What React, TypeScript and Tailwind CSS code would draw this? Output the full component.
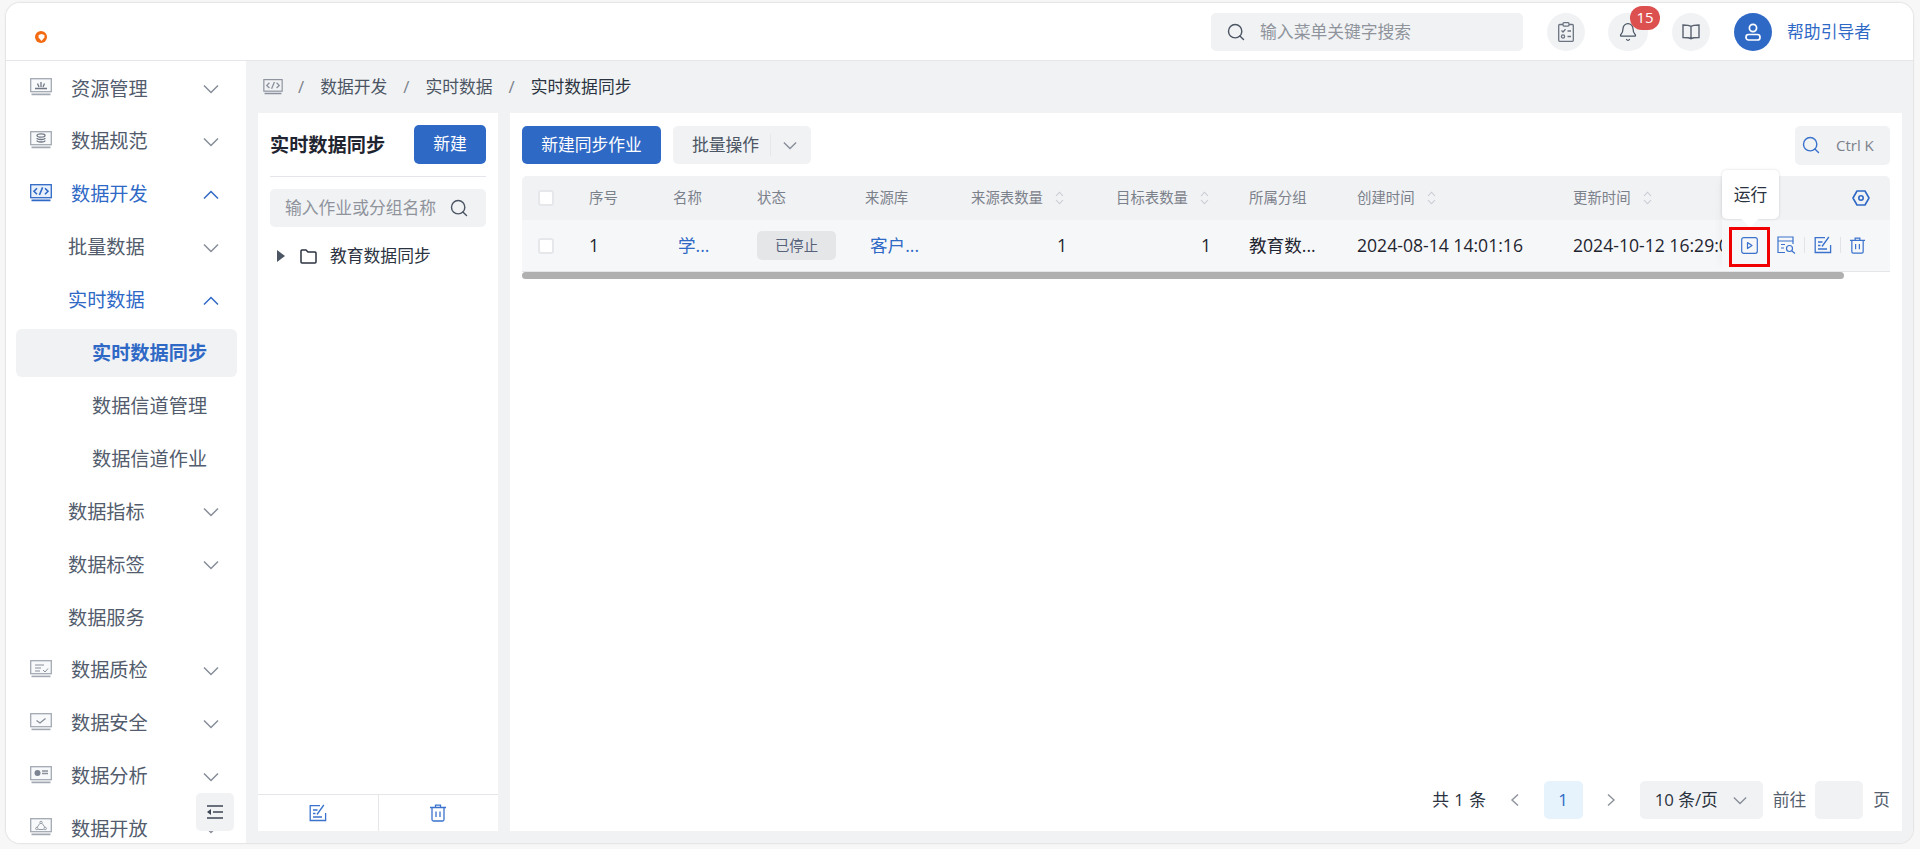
import { Search, Bell } from 'lucide-react';
import type { ReactNode } from 'react';

const Chevron = ({ up, blue, small }: { up?: boolean; blue?: boolean; small?: boolean }) => (
  <svg width={small ? 14 : 16} height={small ? 9 : 10} viewBox="0 0 16 10" fill="none" stroke={blue ? '#2f69c6' : '#878d98'} strokeWidth="1.5" className={up ? 'rotate-180' : ''}>
    <polyline points="1,1.5 8,8.5 15,1.5" />
  </svg>
);

// small monitor used by the top level menu icons
const Monitor = ({ children, active }: { children?: ReactNode; active?: boolean }) => {
  const c = active ? '#2f69c6' : '#a3a9b2';
  return (
    <svg width="22" height="18" viewBox="0 0 22 18" fill="none" stroke={c} strokeWidth="1.3">
      <rect x="0.7" y="0.7" width="20.6" height="13" fill={active ? '#e8f0fb' : '#f8f9fa'} />
      <line x1="1.5" y1="16.4" x2="20.5" y2="16.4" strokeWidth="1.6" />
      {children}
    </svg>
  );
};

const menuIcons: Record<string, ReactNode> = {
  资源管理: (
    <Monitor>
      <path d="M5 10.5h12M11 4v5M7.5 5.5 9 9M14.5 5.5 13 9" stroke="#6f7785" />
    </Monitor>
  ),
  数据规范: (
    <Monitor>
      <ellipse cx="11" cy="4.5" rx="4" ry="1.6" stroke="#6f7785" />
      <path d="M7 7c0 2 8 2 8 0M7 9.5c0 2 8 2 8 0" stroke="#6f7785" />
    </Monitor>
  ),
  数据开发: (
    <Monitor active>
      <path d="M7 4.2 4 7.2l3 3M15 4.2l3 3-3 3M12.6 3.4 9.4 11" stroke="#2f69c6" strokeWidth="1.6" />
    </Monitor>
  ),
  数据质检: (
    <Monitor>
      <path d="M5 5h9M5 8h6M5 11h5M13 10l2 2 3-3.5" stroke="#8a919c" strokeWidth="1" />
    </Monitor>
  ),
  数据安全: (
    <Monitor>
      <path d="M6.5 7.5 10 10l5.5-4.5" stroke="#868d98" />
    </Monitor>
  ),
  数据分析: (
    <Monitor>
      <circle cx="7.5" cy="7" r="3" fill="#7d8592" stroke="none" />
      <path d="M12 5h6M12 7.5h6" stroke="#8a919c" strokeWidth="1.6" />
    </Monitor>
  ),
  数据开放: (
    <Monitor>
      <circle cx="11" cy="4.5" r="1.2" stroke="#8a919c" strokeWidth="0.9" />
      <circle cx="6.8" cy="10.5" r="1.2" stroke="#8a919c" strokeWidth="0.9" />
      <circle cx="15.2" cy="10.5" r="1.2" stroke="#8a919c" strokeWidth="0.9" />
      <path d="M9.8 5.5 7.2 9.2M12.2 5.5l2.6 3.7M8.3 11.5h5.4" stroke="#8a919c" strokeWidth="0.9" />
    </Monitor>
  ),
};

type MenuRow = { label: string; level: 1 | 2 | 3; arrow?: 'up' | 'down'; blue?: boolean; active?: boolean };

const menu: MenuRow[] = [
  { label: '资源管理', level: 1, arrow: 'down' },
  { label: '数据规范', level: 1, arrow: 'down' },
  { label: '数据开发', level: 1, arrow: 'up', blue: true },
  { label: '批量数据', level: 2, arrow: 'down' },
  { label: '实时数据', level: 2, arrow: 'up', blue: true },
  { label: '实时数据同步', level: 3, active: true },
  { label: '数据信道管理', level: 3 },
  { label: '数据信道作业', level: 3 },
  { label: '数据指标', level: 2, arrow: 'down' },
  { label: '数据标签', level: 2, arrow: 'down' },
  { label: '数据服务', level: 2 },
  { label: '数据质检', level: 1, arrow: 'down' },
  { label: '数据安全', level: 1, arrow: 'down' },
  { label: '数据分析', level: 1, arrow: 'down' },
  { label: '数据开放', level: 1, arrow: 'down' },
];

const EditIcon = ({ size = 18 }: { size?: number }) => (
  <svg width={size} height={size} viewBox="0 0 18 18" fill="none" stroke="#3a72cc" strokeWidth="1.3">
    <path d="M11 1.7H1.2v14.8h15.4V9" />
    <path d="M8 10.5 14.8 1" />
    <path d="M4 6h4.5M4 9.5h2.5M4 13h9" />
  </svg>
);

const TrashIcon = ({ size = 18 }: { size?: number }) => (
  <svg width={size} height={size} viewBox="0 0 18 18" fill="none" stroke="#3a72cc" strokeWidth="1.3">
    <path d="M1 3.5h16M6.5 3.5V1.2h5v2.3" />
    <path d="M3 3.5v12a1.5 1.5 0 0 0 1.5 1.5h9a1.5 1.5 0 0 0 1.5-1.5v-12" />
    <path d="M7 7.5v5.5M11 7.5v5.5" />
  </svg>
);

const SortIcon = () => (
  <svg width="9" height="14" viewBox="0 0 9 14" fill="none" stroke="#c6cad1" strokeWidth="1.1" className="shrink-0">
    <path d="M1 5 4.5 1.2 8 5M1 9l3.5 3.8L8 9" />
  </svg>
);

const Checkbox = () => <span className="block h-[16px] w-[16px] rounded-[3px] border-2 border-[#e6e7eb] bg-white" />;

function Sidebar() {
  return (
    <aside className="relative w-[240px] shrink-0 overflow-hidden bg-white pt-[4px]">
      {menu.map((m) => (
        <div
          key={m.label}
          className={`mb-[4.9px] ml-[10px] mr-[9px] flex h-[48px] items-center rounded-[6px] pr-[18px] text-[19.2px] ${
            m.active ? 'bg-[#f1f2f4] font-bold text-[#2f69c6]' : m.blue ? 'text-[#2f69c6]' : 'text-[#525c6c]'
          } ${m.level === 1 ? 'pl-[14px]' : m.level === 2 ? 'pl-[52px]' : 'pl-[76px]'}`}
        >
          {m.level === 1 && <span className="mr-[19px] flex w-[22px] -translate-y-[2px]">{menuIcons[m.label]}</span>}
          <span className="whitespace-nowrap">{m.label}</span>
          {m.arrow && (
            <span className="ml-auto">
              <Chevron up={m.arrow === 'up'} blue={m.blue} />
            </span>
          )}
        </div>
      ))}
      <button className="absolute bottom-[12px] right-[12px] flex h-[38px] w-[38px] items-center justify-center rounded-[5px] bg-[#f1f2f4]">
        <svg width="18" height="14" viewBox="0 0 18 14" fill="none" stroke="#3d4654" strokeWidth="1.6">
          <path d="M1 1h16M7 7h10M1 13h16" />
          <path d="M5 4 1 7l4 3z" fill="#3d4654" stroke="none" />
        </svg>
      </button>
    </aside>
  );
}

function Header() {
  return (
    <header className="flex h-[58px] shrink-0 items-center border-b border-[#e4e6e9] bg-white pr-[42px]">
      <div className="ml-[29px] mt-[11px] flex h-[12px] w-[12px] items-center justify-center rounded-full bg-[#f26a12]">
        <svg width="7" height="7" viewBox="0 0 6 6">
          <path d="M0.5 0.8 3 0l2.5 0.8v2.2L3 6 0.5 3z" fill="#fff" />
        </svg>
      </div>
      <div className="ml-auto flex h-[38px] w-[312px] items-center rounded-[5px] bg-[#f1f2f4] pl-[15px] text-[16.8px] text-[#8f949c]">
        <Search size={20} strokeWidth={1.7} color="#4b5563" />
        <span className="ml-[14px]">输入菜单关键字搜索</span>
      </div>
      <div className="ml-[24px] flex h-[38px] w-[38px] items-center justify-center rounded-full bg-[#f1f2f4]">
        <svg width="16" height="20" viewBox="0 0 16 20" fill="none" stroke="#6b7380" strokeWidth="1.3">
          <rect x="0.7" y="2.5" width="14.6" height="16.8" rx="1" />
          <rect x="5" y="0.7" width="6" height="3.4" rx="1" fill="#f1f2f4" />
          <path d="m3.5 8.5 1.5 1.5 2.5-2.8M9.5 9h3.5M9.5 14.5H13" />
          <circle cx="5" cy="14.5" r="1.6" />
        </svg>
      </div>
      <div className="relative ml-[23px] flex h-[38px] w-[40px] items-center justify-center rounded-full bg-[#f1f2f4]">
        <Bell size={20} strokeWidth={1.5} color="#4b5563" />
        <span className="absolute left-[22px] top-[-7px] flex h-[24px] w-[30px] items-center justify-center rounded-[12px] bg-[#dc5050] text-[15px] text-white">15</span>
      </div>
      <div className="ml-[24px] flex h-[38px] w-[38px] items-center justify-center rounded-full bg-[#f1f2f4]">
        <svg width="18" height="16" viewBox="0 0 18 16" fill="none" stroke="#5a6270" strokeWidth="1.4">
          <path d="M9 2.5C7.5 1.2 4 1 1 1v12.5c3 0 6.5 0 8 1.3 1.5-1.3 5-1.3 8-1.3V1c-3 0-6.500.2-8 1.500zM9 2.500v12" />
        </svg>
      </div>
      <div className="ml-[24px] flex h-[38px] w-[38px] items-center justify-center rounded-full bg-[#2f69c6]">
        <svg width="18" height="18" viewBox="0 0 18 18" fill="none" stroke="#fff" strokeWidth="1.7">
          <circle cx="9" cy="5" r="3.6" />
          <rect x="2" y="11.5" width="14" height="5.500" rx="2.500" />
        </svg>
      </div>
      <span className="ml-[15px] text-[16.8px] text-[#2f69c6]">帮助引导者</span>
    </header>
  );
}

function LeftPanel() {
  return (
    <section className="flex w-[240px] shrink-0 flex-col bg-white">
      <div className="mx-[12px] flex h-[64px] items-center justify-between border-b border-[#e4e6e9] pb-[1px]">
        <span className="mt-[2px] text-[19.2px] font-bold text-[#1f2530]">实时数据同步</span>
        <button className="h-[39px] w-[72px] rounded-[5px] bg-[#2f69c6] text-[16.8px] text-white">新建</button>
      </div>
      <div className="mx-[12px] mt-[12px] flex h-[38px] items-center justify-between rounded-[5px] bg-[#f1f2f4] pl-[15px] pr-[17px] text-[16.8px] text-[#8f949c]">
        <span className="whitespace-nowrap">输入作业或分组名称</span>
        <Search size={20} strokeWidth={1.7} color="#4b5563" />
      </div>
      <div className="mt-[10px] flex h-[38px] items-center pl-[19px] text-[16.8px] text-[#2b3240]">
        <svg width="8" height="12" viewBox="0 0 8 12" className="shrink-0">
          <path d="M0 0l8 6-8 6z" fill="#4b5563" />
        </svg>
        <svg width="17" height="15" viewBox="0 0 17 15" fill="none" stroke="#2b3240" strokeWidth="1.5" className="ml-[15px]">
          <path d="M1 2a1 1 0 0 1 1-1h4l2 2h7a1 1 0 0 1 1 1v9a1 1 0 0 1-1 1H2a1 1 0 0 1-1-1z" />
        </svg>
        <span className="ml-[13px]">教育数据同步</span>
      </div>
      <div className="mt-auto flex h-[37px] border-t border-[#e4e6e9]">
        <div className="flex flex-1 items-center justify-center border-r border-[#e4e6e9]">
          <EditIcon />
        </div>
        <div className="flex flex-1 items-center justify-center">
          <TrashIcon />
        </div>
      </div>
    </section>
  );
}

function TableArea() {
  return (
    <div className="mt-[12px]">
      <div className="flex">
        <div className="min-w-0 flex-1 overflow-hidden">
          <div className="flex h-[44px] items-center whitespace-nowrap rounded-tl-[5px] bg-[#f1f2f4] text-[14.4px] text-[#7b818b]">
            <div className="w-[67px] shrink-0 pl-[16px]">
              <Checkbox />
            </div>
            <div className="w-[84px] shrink-0">序号</div>
            <div className="w-[84px] shrink-0">名称</div>
            <div className="w-[108px] shrink-0">状态</div>
            <div className="w-[106px] shrink-0">来源库</div>
            <div className="flex w-[145px] shrink-0 items-center gap-[12px]">来源表数量<SortIcon /></div>
            <div className="flex w-[133px] shrink-0 items-center gap-[12px]">目标表数量<SortIcon /></div>
            <div className="w-[108px] shrink-0">所属分组</div>
            <div className="flex w-[216px] shrink-0 items-center gap-[12px]">创建时间<SortIcon /></div>
            <div className="flex w-[216px] shrink-0 items-center gap-[12px]">更新时间<SortIcon /></div>
          </div>
          <div className="flex h-[51px] items-center whitespace-nowrap bg-[#f6f7f9] text-[17.6px] text-[#1f2530]">
            <div className="w-[67px] shrink-0 pl-[16px]">
              <Checkbox />
            </div>
            <div className="w-[84px] shrink-0">1</div>
            <div className="w-[84px] shrink-0 pl-[5px] text-[#2f69c6]">学...</div>
            <div className="w-[108px] shrink-0">
              <span className="flex h-[29px] w-[79px] items-center justify-center rounded-[5px] bg-[#e5e6e8] text-[14.4px] text-[#55627a]">已停止</span>
            </div>
            <div className="w-[106px] shrink-0 pl-[5px] text-[#2f69c6]">客户...</div>
            <div className="w-[145px] shrink-0 pr-[49px] text-right">1</div>
            <div className="w-[133px] shrink-0 pr-[38px] text-right">1</div>
            <div className="w-[108px] shrink-0">教育数...</div>
            <div className="w-[216px] shrink-0">2024-08-14 14:01:16</div>
            <div className="w-[216px] shrink-0">2024-10-12 16:29:01</div>
          </div>
        </div>
        <div className="relative w-[168px] shrink-0 shadow-[-8px_0_8px_-6px_rgba(0,0,0,0.04)]">
          <div className="flex h-[44px] items-center justify-end rounded-tr-[5px] bg-[#f1f2f4] pr-[20px]">
            <svg width="18" height="18" viewBox="0 0 18 18" fill="none" stroke="#2f69c6" strokeWidth="1.6" strokeLinejoin="round">
              <polygon points="5,2 13,2 17,9 13,16 5,16 1,9" />
              <circle cx="9" cy="9" r="2.200" />
            </svg>
          </div>
          <div className="flex h-[51px] items-center bg-[#f6f7f9] pb-[1px] pl-[19px]">
            <svg width="17" height="17" viewBox="0 0 17 17" fill="none" stroke="#3a72cc" strokeWidth="1.2" strokeLinejoin="round">
              <rect x="0.7" y="0.7" width="15.600" height="15.600" rx="2" />
              <path d="M6.500 5.500 11 8.500l-4.500 3z" />
            </svg>
            <svg width="19" height="18" viewBox="0 0 19 18" fill="none" stroke="#3a72cc" strokeWidth="1.2" className="ml-[19px]">
              <path d="M8 16.500H1V1h15v7" />
              <path d="M1 5h15M4 8.500h4M4 12h3" />
              <circle cx="12.500" cy="12.500" r="3" />
              <path d="m15 15 3 2.500" />
            </svg>
            <span className="ml-[8px] h-[16px] w-px bg-[#e1e3e7]" />
            <span className="ml-[9px] flex"><EditIcon /></span>
            <span className="ml-[8px] h-[16px] w-px bg-[#e1e3e7]" />
            <span className="ml-[8px] flex"><TrashIcon size={17} /></span>
          </div>
          {/* tooltip and the red marker sit over the action column */}
          <div className="absolute left-0 top-[-6px] flex h-[49px] w-[57px] items-center justify-center rounded-[5px] bg-white text-[16.8px] text-[#2b3240] shadow-[0_0_3px_rgba(0,0,0,0.15)]">
            运行
            <span className="absolute bottom-[-6px] left-[22px] h-[12px] w-[12px] rotate-45 bg-white" />
          </div>
          <div className="absolute left-[7px] top-[51px] h-[40px] w-[41px] border-[3px] border-[#f00000]" />
        </div>
      </div>
      <div className="h-px bg-[#e4e6e9]" />
      <div className="h-[7px] w-[1322px] rounded-full bg-[#b0b0b0]" />
    </div>
  );
}

function Pager() {
  return (
    <div className="mt-auto flex h-[38px] items-center justify-end text-[16.8px] text-[#2b3240]">
      <span className="tracking-[0.5px]">共 1 条</span>
      <svg width="10" height="14" viewBox="0 0 10 14" fill="none" stroke="#8d929b" strokeWidth="1.4" className="ml-[23px]">
        <path d="M8 1.500 2 7l6 5.500" />
      </svg>
      <span className="ml-[24px] flex h-[38px] w-[39px] items-center justify-center rounded-[5px] bg-[#e6f3fd] text-[#2f69c6]">1</span>
      <svg width="10" height="14" viewBox="0 0 10 14" fill="none" stroke="#8d929b" strokeWidth="1.4" className="ml-[23px]">
        <path d="m2 1.500 6 5.500-6 5.500" />
      </svg>
      <span className="ml-[24px] flex h-[38px] w-[123px] items-center rounded-[5px] bg-[#f1f2f4] pl-[15px]">
        10 条/页
        <span className="ml-auto mr-[16px] flex"><Chevron small /></span>
      </span>
      <span className="ml-[10px] text-[#55606f]">前往</span>
      <span className="ml-[9px] h-[38px] w-[48px] rounded-[5px] bg-[#f1f2f4]" />
      <span className="ml-[10px] text-[#55606f]">页</span>
    </div>
  );
}

export default function App() {
  return (
    <div className="h-[849px] w-[1920px] overflow-hidden bg-[#f7f7f7] pb-[6px] pl-[6px] pr-[7px] pt-[3px] font-['Open_Sans','Noto_Sans_CJK_SC',sans-serif]">
      <div className="flex h-full flex-col overflow-hidden rounded-[14px] bg-white shadow-[0_0_2px_rgba(0,0,0,0.25)]">
        <Header />
        <div className="flex min-h-0 flex-1">
          <Sidebar />
          <main className="flex min-w-0 flex-1 flex-col bg-[#f1f2f4]">
            <div className="flex h-[52px] shrink-0 items-center pl-[17px] text-[16.8px] text-[#4b5563]">
              <svg width="20" height="16" viewBox="0 0 22 18" fill="none" stroke="#8a919c" strokeWidth="1.3">
                <rect x="0.7" y="0.7" width="20.600" height="13" />
                <line x1="1.500" y1="16.400" x2="20.500" y2="16.400" strokeWidth="1.600" />
                <path d="M7 4.200 4 7.200l3 3M15 4.200l3 3-3 3M12.600 3.400 9.400 11" strokeWidth="1.500" />
              </svg>
              <span className="ml-[15px] text-[#7b818b]">/</span>
              <span className="ml-[16px]">数据开发</span>
              <span className="ml-[16px] text-[#7b818b]">/</span>
              <span className="ml-[16px]">实时数据</span>
              <span className="ml-[16px] text-[#7b818b]">/</span>
              <span className="ml-[16px] text-[#2b3240]">实时数据同步</span>
            </div>
            <div className="flex min-h-0 flex-1 gap-[12px] pb-[12px] pl-[12px] pr-[11px]">
              <LeftPanel />
              <section className="flex min-w-0 flex-1 flex-col bg-white px-[12px] pb-[12px] pt-[13px]">
                <div className="flex h-[38px] items-center">
                  <button className="h-[38px] w-[139px] rounded-[5px] bg-[#2f69c6] text-[16.8px] text-white">新建同步作业</button>
                  <div className="ml-[12px] flex h-[38px] w-[138px] items-center rounded-[5px] bg-[#f1f2f4] pl-[19px] text-[16.8px] text-[#4b5563]">
                    批量操作
                    <span className="ml-[11px] h-[22px] w-px bg-[#e6e7ea]" />
                    <span className="ml-[12px] flex"><Chevron small /></span>
                  </div>
                  <div className="ml-auto flex h-[39px] w-[95px] items-center rounded-[5px] bg-[#f1f2f4] pl-[6px] text-[15px] text-[#7b818b]">
                    <Search size={20} strokeWidth={1.7} color="#3a72cc" />
                    <span className="ml-[15px] whitespace-nowrap">Ctrl K</span>
                  </div>
                </div>
                <TableArea />
                <Pager />
              </section>
            </div>
          </main>
        </div>
      </div>
    </div>
  );
}
